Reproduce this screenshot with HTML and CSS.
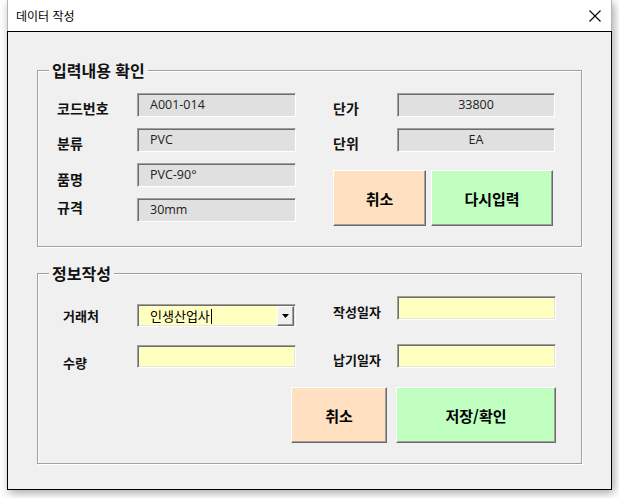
FILE: index.html
```html
<!DOCTYPE html>
<html lang="ko">
<head>
<meta charset="utf-8">
<title>데이터 작성</title>
<link rel="stylesheet" href="styles.css">
</head>
<body>
<div class="window">
  <div class="titlebar">
    <span class="title">데이터 작성</span>
    <svg class="close" width="12" height="12" viewBox="0 0 12 12"><path d="M0.5 0.5 L11.5 11.5 M11.5 0.5 L0.5 11.5" stroke="#000" stroke-width="1.1" fill="none"/></svg>
  </div>
  <div class="client">
    <fieldset class="group g1">
      <legend>입력내용 확인</legend>
      <div class="g1-body">
        <div class="col left1">
          <div class="row"><span class="lbl">코드번호</span><div class="field ro">A001-014</div></div>
          <div class="row"><span class="lbl">분류</span><div class="field ro">PVC</div></div>
          <div class="row"><span class="lbl m7">품명</span><div class="field ro">PVC-90°</div></div>
          <div class="row"><span class="lbl m0">규격</span><div class="field ro">30mm</div></div>
        </div>
        <div class="col right1">
          <div class="row"><span class="lbl">단가</span><div class="field ro center">33800</div></div>
          <div class="row"><span class="lbl">단위</span><div class="field ro center">EA</div></div>
          <div class="btns1">
            <button class="btn peach cancel1">취소</button>
            <button class="btn green retry">다시입력</button>
          </div>
        </div>
      </div>
    </fieldset>
    <fieldset class="group g2">
      <legend>정보작성</legend>
      <div class="g2-top">
        <div class="col left2">
          <div class="row"><span class="lbl m3">거래처</span>
            <div class="field yellow combo"><span class="combo-text">인생산업사<span class="caret"></span></span>
              <span class="dd"><svg width="7" height="4" viewBox="0 0 7 4"><polygon points="0,0 7,0 3.5,4" fill="#000"/></svg></span>
            </div>
          </div>
          <div class="row"><span class="lbl m9">수량</span><div class="field yellow"></div></div>
        </div>
        <div class="col right2">
          <div class="row"><span class="lbl m7">작성일자</span><div class="field yellow"></div></div>
          <div class="row"><span class="lbl m7">납기일자</span><div class="field yellow"></div></div>
        </div>
      </div>
      <div class="g2-btns">
        <button class="btn peach cancel2">취소</button>
        <button class="btn green save">저장/확인</button>
      </div>
    </fieldset>
  </div>
</div>
</body>
</html>
```
FILE: styles.css
```css
* { box-sizing: border-box; }
body {
  margin: 0;
  width: 619px;
  height: 498px;
  overflow: hidden;
  background: #fff;
  font-family: "Noto Sans CJK KR", "Noto Sans", sans-serif;
  color: #000;
}
.window {
  margin-left: 7px;
  width: 605px;
  height: 490px;
  background: #fff;
  box-shadow: 2px 3px 9px rgba(0, 0, 0, 0.35);
}
.titlebar {
  height: 31px;
  display: flex;
  align-items: center;
  justify-content: space-between;
  padding: 0 10px 0 8px;
  border-left: 1px solid #b4b4b4;
  border-right: 1px solid #b4b4b4;
}
.title {
  font-size: 12px;
  line-height: 16px;
  color: #000;
}
.close { display: block; margin-top: 0; }
.client {
  height: 459px;
  border: 1px solid #000;
  background: #f0f0f0;
  padding: 28px 29px 0 29px;
}
.group {
  margin: 0;
  padding: 13px 0 20px 0;
  min-width: 0;
  border: 1px solid #a0a0a0;
  box-shadow: 1px 1px 0 #fff, inset 1px 1px 0 #fff;
}
.g2 { margin-top: 16px; }
legend {
  font-size: 16px;
  font-weight: bold;
  line-height: 20px;
  padding: 0 3px;
  margin-left: 11px;
  background: #f0f0f0;
  color: #111;
}
.col { display: flex; flex-direction: column; }
.row {
  display: flex;
  align-items: flex-start;
  height: 24px;
}
.lbl {
  flex: none;
  font-size: 14px;
  font-weight: bold;
  line-height: 18px;
  margin-top: 6px;
  color: #111;
}
.lbl.m0 { margin-top: 0; }
.lbl.m3 { margin-top: 3px; }
.lbl.m7 { margin-top: 7px; }
.lbl.m9 { margin-top: 9px; }

.field {
  flex: none;
  width: 159px;
  height: 24px;
  border: 1px solid;
  border-color: #a0a0a0 #fff #fff #a0a0a0;
  box-shadow: inset 1px 1px 0 #6e6e6e, inset -1px -1px 0 #e3e3e3;
  font-family: "Open Sans", "Noto Sans CJK KR", sans-serif;
  font-size: 12.5px;
  line-height: 22px;
  padding-left: 12px;
  color: #222;
}
.ro { background: #e0e0e0; }
.center { text-align: center; padding-left: 0; }
.yellow { background: #ffffc0; }

/* group 1 */
.g1-body {
  display: flex;
  gap: 37px;
  padding-left: 19px;
}
.left1 { gap: 11px; }
.left1 .lbl { width: 80px; }
.right1 { gap: 11px; }
.right1 .lbl { width: 64px; }
.right1 .field { width: 158px; }
.btns1 {
  display: flex;
  gap: 5px;
  margin-top: 7px;
}
.btn {
  height: 56px;
  padding: 0;
  border: 1px solid;
  border-color: #fff #6a6a6a #6a6a6a #fff;
  box-shadow: inset -1px -1px 0 #a0a0a0;
  font-family: "Noto Sans CJK KR", sans-serif;
  font-size: 15px;
  font-weight: bold;
  color: #000;
}
.peach { background: #ffe0c0; }
.green { background: #c0ffc0; }
.cancel1 { width: 93px; }
.retry { width: 122px; }

/* group 2 */
.g2-top {
  display: flex;
  gap: 37px;
  padding-left: 25px;
}
.left2 { gap: 18px; margin-top: 8px; }
.left2 .row { height: 23px; }
.left2 .field { height: 23px; }
.left2 .lbl { width: 74px; font-size: 13px; }
.right2 { gap: 24px; }
.right2 .lbl { width: 64px; font-size: 13px; }
.combo {
  display: flex;
  padding-left: 0;
  padding-right: 1px;
  padding-top: 1px;
  padding-bottom: 0;
}
.combo-text {
  flex: 1;
  display: flex;
  align-items: center;
  padding-left: 12px;
  font-family: "Noto Sans CJK KR", sans-serif;
  font-size: 13px;
  color: #000;
}
.caret {
  display: inline-block;
  width: 1px;
  height: 15px;
  background: #000;
  margin-left: 1px;
}
.dd {
  flex: none;
  width: 17px;
  height: 20px;
  display: flex;
  align-items: center;
  justify-content: center;
  background: #f0f0f0;
  border: 1px solid;
  border-color: #fff #6a6a6a #6a6a6a #fff;
  box-shadow: inset -1px -1px 0 #a0a0a0;
}
.dd svg { display: block; }
.g2-btns {
  display: flex;
  justify-content: flex-end;
  gap: 9px;
  margin-top: 19px;
  padding-right: 25px;
}
.cancel2 { width: 96px; }
.save { width: 160px; }
```
